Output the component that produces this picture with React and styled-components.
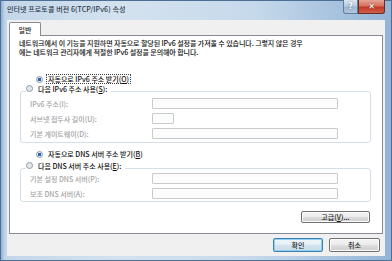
import React from "react";
import styled, { createGlobalStyle } from "styled-components";

const GlobalStyle = createGlobalStyle`
  html, body { margin: 0; padding: 0; background: #ffffff; }
  body {
    font-family: "Noto Sans CJK KR", "Noto Sans", sans-serif;
    font-size: 7px;
    font-weight: 500;
    color: #0e0e0e;
  }
`;

const Window = styled.div`
  width: 392px;
  height: 261px;
  box-sizing: border-box;
  display: flex;
  flex-direction: column;
  padding: 0 6px 4px 6px;
  border: 1px solid #4d6f95;
  background: linear-gradient(
    to right,
    #8fb0d2 0px,
    #c3d6e9 4px,
    #d4e2ef 30%,
    #c6d9eb 65%,
    #93b4d6 100%
  );
`;

const TitleBar = styled.div`
  height: 19px;
  display: flex;
  align-items: flex-start;
  justify-content: space-between;
`;

const Title = styled.div`
  padding-top: 4px;
  font-size: 7px;
  line-height: 8px;
  color: #2b3a4a;
  letter-spacing: 0.1px;
`;

const Controls = styled.div`
  display: flex;
  margin-top: -1px;
`;

const CtrlButton = styled.div`
  width: ${(p) => p.$w}px;
  height: 14px;
  box-sizing: border-box;
  display: flex;
  align-items: center;
  justify-content: center;
  color: #ffffff;
  font-family: "DejaVu Sans", sans-serif;
  font-weight: bold;
  font-size: 8px;
  border: 1px solid ${(p) => (p.$close ? "#6d2a22" : "#5d7e9f")};
  border-top: none;
  border-radius: ${(p) => (p.$close ? "0 0 3px 0" : "0 0 0 3px")};
  background: ${(p) =>
    p.$close
      ? "linear-gradient(#e6a596 0%, #d5705e 45%, #c03a25 55%, #d0604a 100%)"
      : "linear-gradient(#dbe6f2 0%, #b9cde2 45%, #9cb6d1 55%, #b3c8de 100%)"};
  text-shadow: 0 0 2px rgba(0, 0, 0, 0.5);
`;

const Client = styled.div`
  flex: 1;
  display: flex;
  flex-direction: column;
  background: #f0f0f0;
  padding: 2px 2px 0 2px;
`;

const TabStrip = styled.div`
  display: flex;
  height: 13px;
`;

const Tab = styled.div`
  width: 32px;
  height: 14px;
  box-sizing: border-box;
  border: 1px solid #898c95;
  border-bottom: none;
  border-radius: 2px 2px 0 0;
  background: #ffffff;
  display: flex;
  align-items: center;
  justify-content: center;
  position: relative;
  z-index: 1;
  font-size: 7px;
`;

const Panel = styled.div`
  height: 199px;
  box-sizing: border-box;
  border: 1px solid #898c95;
  background: #ffffff;
  padding: 3px 11px 0 9px;
  display: flex;
  flex-direction: column;
`;

const Description = styled.p`
  margin: 0;
  line-height: 8.5px;
  font-size: 7px;
  letter-spacing: -0.08px;
`;

const RadioRow = styled.div`
  display: flex;
  align-items: center;
  height: 10px;
  margin-top: ${(p) => p.$mt || 0}px;
  padding-left: 17px;
`;

const Radio = styled.span`
  width: 7px;
  height: 7px;
  box-sizing: border-box;
  border-radius: 50%;
  border: 1px solid #8797a8;
  background: ${(p) =>
    p.$checked
      ? "radial-gradient(circle, #2b64b0 0 1.6px, #e9eef3 2px)"
      : "radial-gradient(circle, #e2e6ea 0 1.5px, #f6f7f8 3px)"};
  margin-right: 3px;
  flex: none;
`;

const RadioLabel = styled.span`
  line-height: 8px;
  padding: 0 1px;
  border: 1px ${(p) => (p.$focus ? "dotted #404040" : "solid transparent")};
  white-space: nowrap;
`;

const Group = styled.div`
  margin: ${(p) => p.$mt}px 0 0 1px;
  border: 1px solid #d5dfe5;
  border-radius: 3px;
  padding: 0 0 ${(p) => p.$pb}px 0;
  display: flex;
  flex-direction: column;
`;

const Legend = styled.div`
  align-self: flex-start;
  display: flex;
  align-items: center;
  height: 9px;
  margin: -8px 0 0 5px;
  padding-right: 2px;
  background: #ffffff;
`;

const FieldList = styled.div`
  display: flex;
  flex-direction: column;
  gap: ${(p) => p.$gap}px;
  margin-top: ${(p) => p.$mt}px;
  padding-left: 9px;
`;

const FieldRow = styled.div`
  display: flex;
  align-items: center;
  height: 11px;
`;

const FieldLabel = styled.span`
  width: 122px;
  color: #a4a4a4;
  white-space: nowrap;
`;

const Input = styled.div`
  width: ${(p) => p.$w}px;
  height: 11px;
  box-sizing: border-box;
  border: 1px solid #c6cbd0;
  border-radius: 1px;
  background: #fcfcfc;
`;

const AdvancedRow = styled.div`
  display: flex;
  justify-content: flex-end;
  margin-top: 9px;
  padding-right: 1px;
`;

const Button = styled.div`
  width: ${(p) => p.$w}px;
  height: ${(p) => p.$h}px;
  box-sizing: border-box;
  display: flex;
  align-items: center;
  justify-content: center;
  border-radius: 2px;
  font-size: 7px;
  color: #1e1e1e;
  border: 1px solid ${(p) => (p.$default ? "#3c7fb1" : "#707070")};
  box-shadow: inset 0 0 0 1px
    ${(p) => (p.$default ? "#8fd0f0" : "#fbfbfb")};
  background: ${(p) =>
    p.$default
      ? "linear-gradient(#f0f6fa 0%, #e3eef5 50%, #d3e3ee 50%, #c9dce9 100%)"
      : "linear-gradient(#f4f4f4 0%, #ebebeb 50%, #dddddd 50%, #cfcfcf 100%)"};
`;

const Footer = styled.div`
  display: flex;
  justify-content: flex-end;
  gap: 6px;
  padding: 4px 3px 0 0;
`;

function AddressGroup({ mt, pb, legend, gap, listMt, fields }) {
  return (
    <Group $mt={mt} $pb={pb}>
      <Legend>
        <Radio />
        <RadioLabel>{legend}</RadioLabel>
      </Legend>
      <FieldList $gap={gap} $mt={listMt}>
        {fields.map((f) => (
          <FieldRow key={f.label}>
            <FieldLabel>{f.label}</FieldLabel>
            <Input $w={f.w} />
          </FieldRow>
        ))}
      </FieldList>
    </Group>
  );
}

export default function App() {
  return (
    <>
      <GlobalStyle />
      <Window>
        <TitleBar>
          <Title>인터넷 프로토콜 버전 6(TCP/IPv6) 속성</Title>
          <Controls>
            <CtrlButton $w={15}>?</CtrlButton>
            <CtrlButton $w={27} $close>
              ✕
            </CtrlButton>
          </Controls>
        </TitleBar>
        <Client>
          <TabStrip>
            <Tab>일반</Tab>
          </TabStrip>
          <Panel>
            <Description>
              네트워크에서 이 기능을 지원하면 자동으로 할당된 IPv6 설정을 가져올 수
              있습니다. 그렇지 않은 경우
              <br />
              에는 네트워크 관리자에게 적절한 IPv6 설정을 문의해야 합니다.
            </Description>
            <RadioRow $mt={18}>
              <Radio $checked />
              <RadioLabel $focus>
                자동으로 IPv6 주소 받기(<u>O</u>)
              </RadioLabel>
            </RadioRow>
            <AddressGroup
              mt={7}
              pb={3}
              gap={4}
              listMt={5}
              legend={
                <>
                  다음 IPv6 주소 사용(<u>S</u>):
                </>
              }
              fields={[
                { label: "IPv6 주소(I):", w: 186 },
                { label: "서브넷 접두사 길이(U):", w: 22 },
                { label: "기본 게이트웨이(D):", w: 186 },
              ]}
            />
            <RadioRow $mt={6}>
              <Radio $checked />
              <RadioLabel>
                자동으로 DNS 서버 주소 받기(<u>B</u>)
              </RadioLabel>
            </RadioRow>
            <AddressGroup
              mt={9}
              pb={2}
              gap={4}
              listMt={3}
              legend={
                <>
                  다음 DNS 서버 주소 사용(<u>E</u>):
                </>
              }
              fields={[
                { label: "기본 설정 DNS 서버(P):", w: 186 },
                { label: "보조 DNS 서버(A):", w: 186 },
              ]}
            />
            <AdvancedRow>
              <Button $w={69} $h={12}>
                고급(<u>V</u>)...
              </Button>
            </AdvancedRow>
          </Panel>
          <Footer>
            <Button $w={50} $h={14} $default>
              확인
            </Button>
            <Button $w={51} $h={14}>
              취소
            </Button>
          </Footer>
        </Client>
      </Window>
    </>
  );
}
